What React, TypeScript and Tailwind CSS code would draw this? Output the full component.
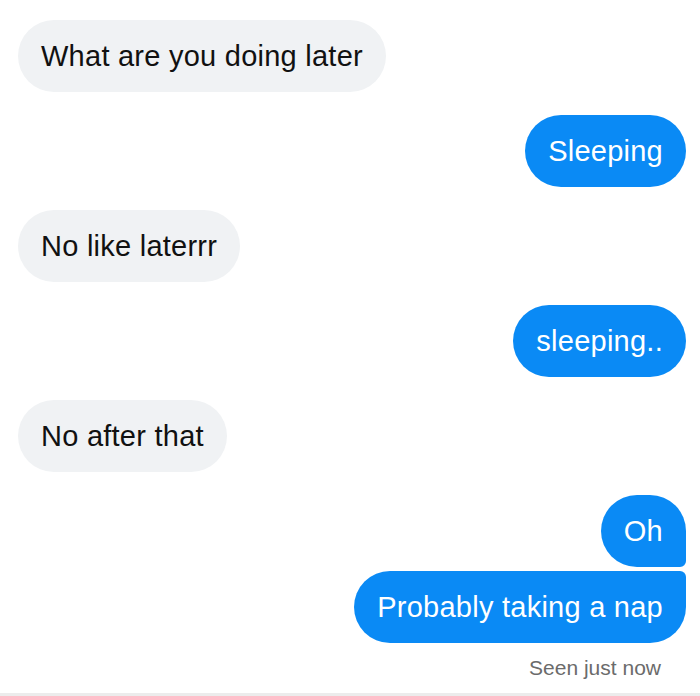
const messages = [
  { text: 'What are you doing later', me: false },
  { text: 'Sleeping', me: true },
  { text: 'No like laterrr', me: false },
  { text: 'sleeping..', me: true },
  { text: 'No after that', me: false },
];

function Bubble({ text, me, shape = 'rounded-full' }: { text: string; me: boolean; shape?: string }) {
  return (
    <div
      className={`h-[72px] px-[23px] pt-[2px] flex items-center text-[29px] tracking-[0.25px] ${shape} ${
        me ? 'bg-[#0a8af5] text-white' : 'bg-[#f0f2f4] text-[#111]'
      }`}
    >
      {text}
    </div>
  );
}

export default function App() {
  return (
    <div
      className="w-[700px] h-[696px] bg-white flex flex-col overflow-hidden"
      style={{ fontFamily: '"Liberation Sans", Arial, sans-serif' }}
    >
      <div className="flex-1 flex flex-col pt-5 pl-[18px] pr-[14px]">
        <div className="flex flex-col gap-[23px]">
          {messages.map((m, i) => (
            <div key={i} className={`flex ${m.me ? 'justify-end' : 'justify-start'}`}>
              <Bubble text={m.text} me={m.me} />
            </div>
          ))}
          <div className="flex flex-col items-end gap-1">
            <Bubble text="Oh" me shape="rounded-[36px] rounded-br-[6px]" />
            <Bubble text="Probably taking a nap" me shape="rounded-[36px] rounded-tr-[6px]" />
          </div>
        </div>
        <div className="flex justify-end pr-[25px] mt-[9px] text-[21px] text-[#6b6b6b]">Seen just now</div>
      </div>
      <div className="h-[3px] bg-[#ececec]" />
    </div>
  );
}
